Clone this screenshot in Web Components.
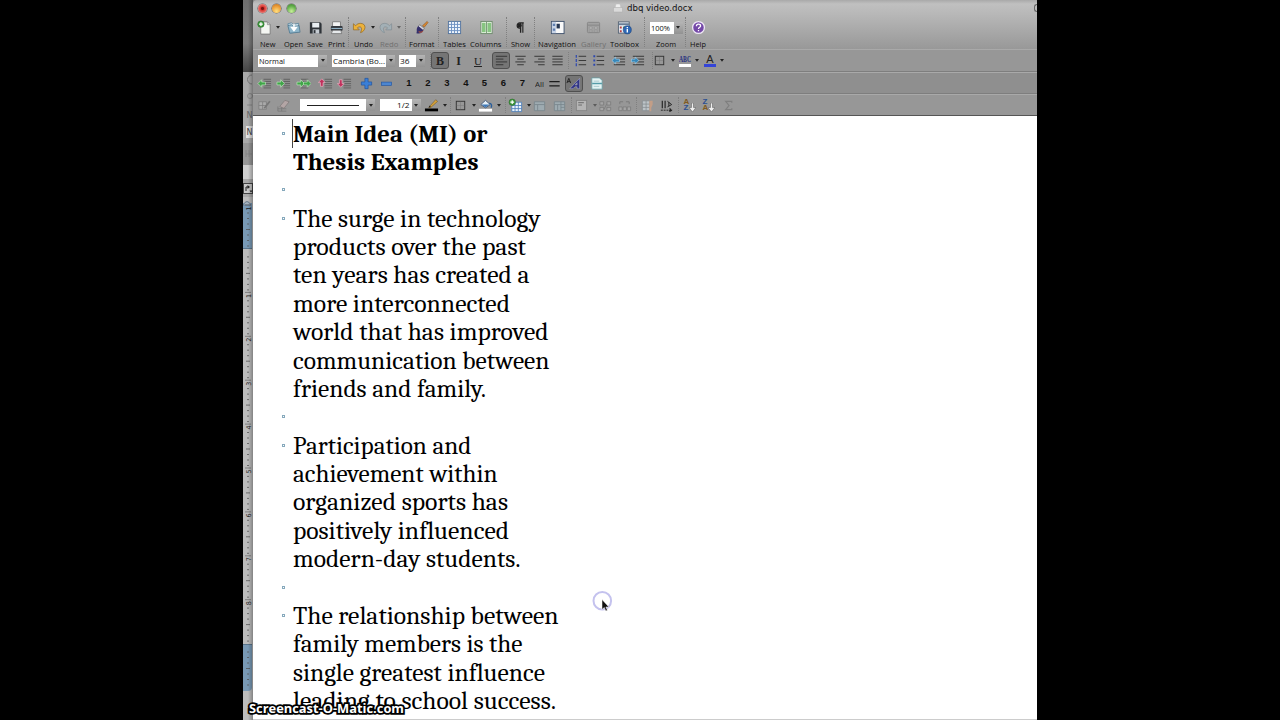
<!DOCTYPE html>
<html lang="en">
<head>
<meta charset="utf-8">
<title>dbq video.docx</title>
<style>
html, body {
    margin: 0;
    height: 100%;
    background: #000;
    overflow: hidden;
}
</style>
</head>
<body>
<screen-cast></screen-cast>
<script>
const ARROW = '<path d="M0 0h5l-2.5 3.4z" fill="#222"/>';
const lines = (x, y, w, n, gap, color) => {
    let out = '';
    for (let i = 0; i < n; i++) {
        out += `<path d="M${x} ${y + i * gap}h${w}" stroke="${color}" stroke-width="1"/>`;
    }
    return out;
};
const greenArrow = (x, flip) => `<path transform="translate(${x} 8)${flip ? ' scale(-1 1)' : ''}" d="M-4 0L0-4v2.5h4v3H0V4z" fill="#3fa548" stroke="#c4e6c2" stroke-width=".7"/>`;
const pinkArrow = (y, flip) => `<path transform="translate(4 ${y})${flip ? ' scale(1 -1)' : ''}" d="M0-4L-3.6 0h2.2v4h2.8V0h2.2z" fill="#c0305c" stroke="#e8b5c4" stroke-width=".7"/>`;

/* every icon is drawn in a 16x16 box */
const ICONS = {
    'new': '<path d="M4 2h7l3 3v10H4z" fill="#f4f6f2" stroke="#707070" stroke-width=".8"/><path d="M11 2v3h3" fill="#ccc" stroke="#777" stroke-width=".6"/><circle cx="4.2" cy="4.4" r="3.4" fill="#3f9a3d" stroke="#276a28" stroke-width=".6"/><path d="M4.2 2.4v4M2.2 4.4h4" stroke="#fff" stroke-width="1.4"/>',
    open: '<path d="M2 4l4-1 1.500 1.500 6-1v9l-9 1.500z" fill="#c5dbe6" stroke="#537d95" stroke-width=".8"/><path d="M4 14l-2-8 4-1 2 2 6-1 1 7z" fill="#8fb6ca" stroke="#456e86" stroke-width=".7"/><path d="M8.500 4v5M5.800 8h5.400L8.500 11.500z" stroke="#fff" stroke-width="1.400" fill="#fff"/>',
    save: '<path d="M2 2.500h11l1.500 1.500v10.500H2z" fill="#2e3338"/><rect x="4.500" y="3" width="7.500" height="5" fill="#e9eef2"/><rect x="5" y="10" width="7" height="4.500" fill="#c6ccd2"/><rect x="6" y="10.800" width="2" height="3.200" fill="#2e3338"/>',
    print: '<rect x="4" y="2" width="8" height="5" fill="#f3f3f3" stroke="#555" stroke-width=".6"/><rect x="2" y="6.500" width="12.500" height="5" rx="1" fill="#353a40"/><path d="M2.500 9h11.500" stroke="#9fc3d8"/><path d="M4 11h8.500l1 3.500h-11z" fill="#e6e9eb" stroke="#555" stroke-width=".6"/>',
    undo: '<path d="M1.500 4v6.500h6.300L5.700 8.300c2.600-2 5.300-.8 4.400 2.600l-1 2.600c5.800-1.700 6.800-9.600.2-9.900-2.300-.1-4.200.9-5.500 2.500z" fill="#edb23a" stroke="#8e641b" stroke-width=".7"/>',
    redo: '<path transform="matrix(-1 0 0 1 16 0)" d="M1.500 4v6.500h6.300L5.700 8.300c2.600-2 5.300-.8 4.400 2.600l-1 2.600c5.800-1.700 6.800-9.600.2-9.900-2.300-.1-4.200.9-5.500 2.500z" fill="#a3b0b6" stroke="#7e8b91" stroke-width=".7"/>',
    format: '<path d="M14 1.500l1 1.200-4 5-2-1.500z" fill="#d98832" stroke="#7a4513" stroke-width=".5"/><path d="M6 5l5 4-1.500 2-5-4z" fill="#d6d6de" stroke="#444" stroke-width=".5"/><path d="M4.500 6.500l5.500 4.500c-.5 3-4 4-7.500 3C4 12 1.500 10 4.500 6.500z" fill="#35306d"/><path d="M5 12.500c2 1 4 .5 4.500-1" stroke="#d35f30" fill="none"/>',
    tables: '<rect x="1.500" y="1.500" width="13" height="13" fill="#eef4fc" stroke="#54759f"/><path d="M2 4.700h12M2 8h12M2 11.300h12M4.800 2v12M8 2v12M11.200 2v12" stroke="#6d91c2"/>',
    columns: '<rect x="2" y="1.500" width="12" height="13" fill="#e9f5e6" stroke="#6d8a6b"/><rect x="3.200" y="3" width="3.800" height="10" fill="#87c581"/><rect x="9" y="3" width="3.800" height="10" fill="#87c581"/><path d="M8 2v12" stroke="#7a9478"/>',
    show: '<path d="M11.500 3H7.200a2.800 2.800 0 000 5.600H8V13.500M8.200 3v10.500M10.500 3v10.500" stroke="#222" stroke-width="1.200" fill="none"/><circle cx="7" cy="5.800" r="2.300" fill="#222"/>',
    navigation: '<rect x="1.500" y="1.500" width="13.500" height="13" fill="#fafafa" stroke="#40536e"/><rect x="2" y="2" width="4.500" height="12" fill="#c7d3e6"/><path d="M3 4h2.500v2.500H3zM3 9h2.500v2.500H3z" fill="#5f7fb0"/><rect x="7" y="4" width="3.500" height="5" fill="#263753"/>',
    gallery: '<rect x="1.500" y="2.500" width="13" height="11" rx="1" fill="#a2a2a2" stroke="#858585"/><path d="M2 5.500h12" stroke="#858585"/><path d="M3.500 7.500h3v2h-3zM9 7.500h3v2H9zM3.500 11h3v1.500h-3zM9 11h3v1.500H9z" fill="#bcbcbc" stroke="#858585" stroke-width=".5"/>',
    toolbox: '<rect x="1.500" y="2" width="11.500" height="12" fill="#e6ecf2" stroke="#566475"/><path d="M2 4.500h11" stroke="#697d94" stroke-width="2"/><path d="M3 7h2v2H3zM3 11h2v2H3z" fill="#b84040"/><path d="M6.500 7h2v2h-2z" fill="#599256"/><circle cx="11" cy="10.500" r="4.300" fill="#2d67b5" stroke="#173e79" stroke-width=".6"/><path d="M11 9.700v3.600M11 7.500v1.200" stroke="#fff" stroke-width="1.500"/>',
    help: '<circle cx="8" cy="8" r="6.300" fill="#7448a8" stroke="#efe8f6" stroke-width="1.400"/><path d="M5.800 6.600c0-3 4.400-2.700 4.400-.3 0 1.500-2.200 1.600-2.200 3.300M8 10.700v1.400" stroke="#fff" stroke-width="1.400" fill="none"/>',
    left: lines(2, 3.5, 12, 1, 1, '#333') + lines(2, 6.5, 8, 1, 1, '#333') + lines(2, 9.5, 12, 1, 1, '#333') + lines(2, 12.5, 8, 1, 1, '#333'),
    center: lines(2.5, 3.5, 11, 1, 1, '#333') + lines(4.5, 6.5, 7, 1, 1, '#333') + lines(2.5, 9.5, 11, 1, 1, '#333') + lines(4.5, 12.5, 7, 1, 1, '#333'),
    right: lines(2.5, 3.5, 11, 1, 1, '#333') + lines(6.5, 6.5, 7, 1, 1, '#333') + lines(2.5, 9.5, 11, 1, 1, '#333') + lines(6.5, 12.5, 7, 1, 1, '#333'),
    justify: lines(2.5, 3.5, 11, 4, 3, '#333'),
    numbers: '<path d="M3.500 2v3M3.500 6.500v3M3.500 11v3" stroke="#2d48b0" stroke-width="1.300"/>' + lines(6, 3.5, 8, 3, 4.5, '#333'),
    bullets: '<path d="M2.500 2.500h2v2h-2zM2.500 7h2v2h-2zM2.500 11.500h2v2h-2z" fill="#2d48b0"/>' + lines(6, 3.5, 8, 3, 4.5, '#333'),
    outdent: lines(3, 3.5, 12, 4, 3, '#333') + '<path d="M1 8l4-3.700v2.200h4v3H5v2.200z" fill="#3587ba" stroke="#b8dcef" stroke-width=".6"/>',
    indent: lines(3, 3.5, 12, 4, 3, '#333') + '<path d="M9.500 8l-4-3.700v2.200h-4v3h4v2.200z" fill="#3587ba" stroke="#b8dcef" stroke-width=".6"/>',
    border: '<rect x="3.500" y="3.500" width="9" height="9" fill="none" stroke="#333"/><path d="M4 8h8M8 4v8" stroke="#777" stroke-width=".5"/>',
    promote: lines(7, 3.5, 8, 5, 2.3, '#606060') + greenArrow(5),
    demote: lines(8, 3.5, 7, 5, 2.3, '#606060') + greenArrow(5, true),
    body: lines(5, 3.5, 8, 5, 2.3, '#606060') + greenArrow(5, true) + greenArrow(12, true),
    up: lines(7, 3.5, 8, 5, 2.3, '#606060') + pinkArrow(7),
    down: lines(7, 3.5, 8, 5, 2.3, '#606060') + pinkArrow(8, true),
    plus: '<path d="M6.300 2.500h3.400v3.800h3.800v3.400H9.700v3.800H6.300V9.700H2.500V6.300h3.800z" fill="#3b7fd6" stroke="#2456a0" stroke-width=".8"/>',
    minus: '<rect x="2.500" y="6.500" width="11" height="3.500" fill="#4c86d0" stroke="#2456a0" stroke-width=".7"/>',
    equals: '<path d="M2.500 6h11M2.500 10.500h11" stroke="#1c1c1c" stroke-width="1.500"/>',
    formatting: '<path d="M1 7.500l2-5 2 5M1.700 6h2.700" fill="none" stroke="#222" stroke-width="1"/><path fill-rule="evenodd" d="M4 13.500L14.500 2.500v11h-2.700v-2H9.500l-2 2zM11.800 7.200v2.300H9.800z" fill="#303486" stroke="#d5d5e5" stroke-width=".4"/>',
    master: '<path d="M3 2h8l3 2.500V14H3z" fill="#e5f4f4" stroke="#679da4" stroke-width=".8"/><path d="M3.400 8h10.400" stroke="#549ca8" stroke-width="1.600"/><path d="M5 5.500h6M5 11h6" stroke="#a5c8cc"/>',
    drawtable: '<path d="M2 4h8v8H2zM2 8h8M6 4v8" fill="#aaa" stroke="#7b7b7b" stroke-width=".8"/><path d="M7 10.500L13 3l1.500 1-6 7.500z" fill="#777"/>',
    eraser: '<path d="M2 9v5h9M2 11.500h9M6 9v5" fill="none" stroke="#777" stroke-width=".8"/><path d="M4 9l5.500-6.500L14 4l-5.500 7z" fill="#b3a5a5" stroke="#7a7474" stroke-width=".7"/>',
    pen: '<rect x="1" y="11.200" width="14" height="3" fill="#000"/><path d="M5 10L12.500 1.800l2 1.800L7 10.300z" fill="#d4a23b" stroke="#624716" stroke-width=".5"/><path d="M5 10l1-2 1.500 1.500z" fill="#222"/>',
    bucket: '<rect x="1" y="11.500" width="14" height="3" fill="#fff"/><path d="M3 7l5-4.500 5 4.500-5 3.500z" fill="#e5eef5" stroke="#374d6c" stroke-width=".9"/><path d="M4 7h8l-4 3z" fill="#3d78b8"/><path d="M12 5.500c3 .5 2.800 3 2 4.800" stroke="#285d9b" stroke-width="1.400" fill="none"/>',
    inserttable: '<path d="M4 4.500h10.500v10H4zM4 8h10.500M4 11.300h10.500M7.500 4.500v10M11 4.500v10" fill="#eaf3fc" stroke="#4d7fb9" stroke-width=".9"/><circle cx="4.500" cy="4.500" r="3.400" fill="#3f9a3d" stroke="#276a28" stroke-width=".6"/><path d="M4.500 2.500v4M2.500 4.500h4" stroke="#fff" stroke-width="1.300"/>',
    delrow: '<path d="M2.500 4h11v9.500h-11zM2.500 7h11M6 7v6.500" fill="#9eabb1" stroke="#79868c" stroke-width=".9"/>',
    delcol: '<path d="M2.500 4h11v9.500h-11zM2.500 7h11M6 7v6.500M9.500 4v9.500M9.500 10h4" fill="#9eabb1" stroke="#79868c" stroke-width=".9"/>',
    alignbox: '<rect x="2.500" y="2.500" width="11" height="11" fill="#b5b5b5" stroke="#858585"/><path d="M4.500 5h6M4.500 7.500h4" stroke="#666"/>',
    merge: '<path d="M2 4h4v3.500H2zM2 10h4v3.500H2zM9.500 4h4v3.500h-4zM9.500 10h4v3.500h-4z" fill="#a5a5a5" stroke="#7a7a7a" stroke-width=".8"/><path d="M6.500 12l3-6" stroke="#808080"/>',
    split: '<path d="M2 9.500h3.500v4H2zM6.500 9.500H10v4H6.500zM11 9.500h3.500v4H11z" fill="#a5a5a5" stroke="#7a7a7a" stroke-width=".8"/><path d="M3 6.500V4h3.500M13 6.500V4H9.500" fill="none" stroke="#7a7a7a"/>',
    autofit: '<path d="M2.500 3h8v10.500h-8zM2.500 6.500h8M2.500 10h8M6.500 3v10.500" fill="#bcc3c7" stroke="#848b8f" stroke-width=".8"/><path d="M10 3h3.500v4L12 10.500V14h-2z" fill="#c39e87"/>',
    direction: '<path d="M3.500 3v8M6.500 3v8" stroke="#222" stroke-width="1.200"/><path d="M9 3.500l4.500 3.500L9 9.500M10.500 4.500v4" stroke="#222" fill="none"/><path d="M2 13h10.500M11.500 11.300l2.500 1.700-2.500 1.700z" stroke="#222" stroke-dasharray="2 1" fill="#222"/>',
    sigma: '<path d="M11.500 5V3.500h-6.500L8.500 8 5 12.500h6.500V11" fill="none" stroke="#7f7f7f" stroke-width="1.300"/>'
};

function define(name, html, ready) {
    const template = document.createElement('template');
    template.innerHTML = html;
    customElements.define(name, class extends HTMLElement {
        shadowRoot = this.attachShadow({mode: 'open'});
        constructor() {
            super();
            this.shadowRoot.append(template.content.cloneNode(true));
        }
        connectedCallback() {
            if (ready) {
                ready(this, this.shadowRoot);
            }
        }
    });
}

/* text squeezed or stretched to a given width */
define('fit-text', `
<style>
:host {
    display: block;
    flex: none;
}
span {
    display: block;
    width: max-content;
    white-space: nowrap;
    transform-origin: 0 50%;
}
</style>
<span></span>
`, (host, root) => {
    const span = root.querySelector('span');
    span.textContent = host.getAttribute('text');
    const width = Number(host.getAttribute('width'));
    const natural = span.getBoundingClientRect().width;
    host.style.width = `${width}px`;
    if (natural) {
        span.style.transform = `scaleX(${width / natural})`;
    }
});

define('tool-icon', `
<style>
:host {
    display: block;
    flex: none;
    width: 15px;
    height: 15px;
}
svg {
    display: block;
    width: 100%;
    height: 100%;
}
</style>
<svg viewBox="0 0 16 16"></svg>
`, (host, root) => {
    root.querySelector('svg').innerHTML = ICONS[host.getAttribute('name')] || '';
});

define('drop-arrow', `
<style>
:host {
    display: block;
    flex: none;
    width: 4px;
    height: 3px;
}
svg {
    display: block;
}
</style>
<svg width="4" height="3" viewBox="0 0 5 3.500">${ARROW}</svg>
`);

define('tool-cell', `
<style>
:host {
    display: flex;
    flex: none;
    align-items: center;
    justify-content: center;
    height: 100%;
    white-space: nowrap;
}
.button {
    display: flex;
    flex: none;
    align-items: center;
    justify-content: center;
    gap: 4px;
}
:host([pressed]) .button {
    width: 18px;
    height: 17px;
    border: 1px solid #505050;
    border-radius: 3px;
    background: #757575;
    box-sizing: border-box;
}
:host([label]) {
    flex-direction: column;
    justify-content: flex-start;
}
:host([label]) .button {
    height: 17px;
    margin-top: 4px;
}
fit-text {
    display: none;
    color: #111;
    font: 8px/11px "Lucida Grande", "Open Sans", "DejaVu Sans", sans-serif;
    margin-top: 2px;
}
:host([label]) fit-text {
    display: block;
}
:host([disabled]) fit-text {
    color: #717171;
}
</style>
<div class="button"><slot></slot></div>
`, (host, root) => {
    host.style.width = `${host.getAttribute('w')}px`;
    if (host.hasAttribute('label')) {
        const text = document.createElement('fit-text');
        text.setAttribute('text', host.getAttribute('label'));
        text.setAttribute('width', host.getAttribute('lw'));
        root.append(text);
    }
});

define('tool-sep', `
<style>
:host {
    display: flex;
    flex: none;
    justify-content: center;
    align-items: center;
    height: 100%;
}
i {
    height: calc(100% - 4px);
    border-left: 1px dotted #808080;
}
</style>
<i></i>
`, host => {
    host.style.width = `${host.getAttribute('w')}px`;
});

define('combo-box', `
<style>
:host {
    display: flex;
    flex: none;
    height: 12px;
    background: #fff;
    align-items: stretch;
    color: #111;
    font: 8px/12px "Lucida Grande", "Open Sans", "DejaVu Sans", sans-serif;
}
div {
    flex: 1;
    display: flex;
    align-items: center;
    padding: 0 1px;
    min-width: 0;
}
:host([end]) div {
    justify-content: flex-end;
    padding-right: 2px;
}
b {
    display: flex;
    align-items: center;
    justify-content: center;
    width: 9px;
    background: linear-gradient(#b5b5b5, #929292);
}
</style>
<div><slot></slot></div><b><drop-arrow></drop-arrow></b>
`, host => {
    host.style.width = `${host.getAttribute('w')}px`;
});

define('tool-row', `
<style>
:host {
    display: flex;
    align-items: center;
    box-sizing: border-box;
    border-top: 1px solid #a9a9a9;
    border-bottom: 1px solid #7e7e7e;
    background: #979797;
}
</style>
<slot></slot>
`);

define('title-bar', `
<style>
:host {
    display: flex;
    height: 14px;
    align-items: center;
    padding-left: 5px;
    box-sizing: border-box;
}
.light {
    width: 9px;
    height: 9px;
    margin-right: 5.300px;
    border-radius: 50%;
    box-shadow: 0 0 0 .6px #666;
}
.close { background: radial-gradient(circle at 50% 50%, #7c1414 18%, #d9352f 30%, #f1a29d 95%); }
.min { background: radial-gradient(circle at 50% 80%, #ffe080, #ea9a35 60%, #b86d20); }
.zoom { background: radial-gradient(circle at 50% 80%, #c9f09a, #61ae49 60%, #3d7c30); }
.title {
    display: flex;
    align-items: center;
    gap: 4px;
    margin-left: 312px;
    color: #111;
    font: 9.500px/12px "Lucida Grande", "DejaVu Sans", sans-serif;
}
.corner {
    margin-left: auto;
    width: 2px;
    height: 6px;
    border: 1px solid #666;
    border-right: 0;
    border-radius: 6px 0 0 6px;
}
</style>
<i class="light close"></i><i class="light min"></i><i class="light zoom"></i>
<div class="title">
    <svg width="10" height="10" viewBox="0 0 10 10"><path d="M3 1h4l1 4H2z" fill="#eee" stroke="#bbb" stroke-width=".5"/><path d="M.5 4.500h9V9h-9z" fill="#dadada" stroke="#aaa" stroke-width=".5"/></svg>
    <fit-text text="dbq video.docx" width="65.500"></fit-text>
</div>
<i class="corner"></i>
`);

define('word-toolbars', `
<style>
:host {
    display: block;
    border-bottom: 1px solid #555;
}
.top {
    height: 49px;
    padding-top: 1px;
    box-sizing: border-box;
    background: linear-gradient(#a9a9a9, #c0c0c0 8%, #b7b7b7 30%, #989898);
    border-top-left-radius: 4px;
}
.main {
    height: 34px;
    background: none;
    border: 0;
}
.format { height: 23px; }
.outline { height: 22px; background: #8f8f8f; }
.tables { height: 21px; border-bottom: 0; }
.glyph { font: bold 12px/14px "Liberation Serif", serif; color: #222; }
.light { font-weight: normal; font-size: 11px; }
.num { font: bold 9.500px/12px "Liberation Sans", sans-serif; color: #111; padding-left: 1px; }
.all { font: 8px/12px "Open Sans", "DejaVu Sans", sans-serif; color: #222; padding-top: 1px; }
.color {
    display: flex;
    flex-direction: column;
    align-items: center;
    font: 11px/10px "Liberation Sans", sans-serif;
    color: #222;
    border-bottom: 3px solid #3344d8;
    width: 12px;
}
.abc {
    font: bold 8px/8px "Liberation Serif", serif;
    color: #26307f;
    border-color: #fff;
    padding-top: 2px;
}
.sort {
    display: flex;
    align-items: flex-end;
    font: bold 8px/6.500px "Liberation Sans", sans-serif;
}
.sort span { display: flex; flex-direction: column; }
.rule { width: 52px; border-top: 1px solid #222; margin: 0 6px; }
</style>
<div class="top">
<title-bar></title-bar>
<tool-row class="main">
    <tool-cell w="30" label="New" lw="15.500"><tool-icon name="new"></tool-icon><drop-arrow></drop-arrow></tool-cell>
    <tool-cell w="20" label="Open" lw="19"><tool-icon name="open"></tool-icon></tool-cell>
    <tool-cell w="24" label="Save" lw="16"><tool-icon name="save"></tool-icon></tool-cell>
    <tool-cell w="18" label="Print" lw="17"><tool-icon name="print"></tool-icon></tool-cell>
    <tool-sep w="6"></tool-sep>
    <tool-cell w="25" label="Undo" lw="19"><tool-icon name="undo"></tool-icon><drop-arrow></drop-arrow></tool-cell>
    <tool-cell w="27" label="Redo" lw="18.500" disabled><tool-icon name="redo"></tool-icon><drop-arrow style="opacity:.5"></drop-arrow></tool-cell>
    <tool-sep w="5"></tool-sep>
    <tool-cell w="27" label="Format" lw="25.500"><tool-icon name="format"></tool-icon></tool-cell>
    <tool-sep w="6"></tool-sep>
    <tool-cell w="27" label="Tables" lw="23"><tool-icon name="tables"></tool-icon></tool-cell>
    <tool-cell w="36" label="Columns" lw="31.500"><tool-icon name="columns"></tool-icon></tool-cell>
    <tool-sep w="5"></tool-sep>
    <tool-cell w="22" label="Show" lw="19"><tool-icon name="show"></tool-icon></tool-cell>
    <tool-sep w="6"></tool-sep>
    <tool-cell w="40" label="Navigation" lw="38"><tool-icon name="navigation"></tool-icon></tool-cell>
    <tool-cell w="32" label="Gallery" lw="25" disabled><tool-icon name="gallery"></tool-icon></tool-cell>
    <tool-cell w="31" label="Toolbox" lw="29"><tool-icon name="toolbox"></tool-icon></tool-cell>
    <tool-sep w="8"></tool-sep>
    <tool-cell w="36" label="Zoom" lw="20"><combo-box w="33"><fit-text text="100%" width="19"></fit-text></combo-box></tool-cell>
    <tool-sep w="3"></tool-sep>
    <tool-cell w="22" label="Help" lw="16"><tool-icon name="help"></tool-icon></tool-cell>
</tool-row>
</div>
<tool-row class="format">
    <tool-cell w="79"><combo-box w="69"><fit-text text="Normal" width="26"></fit-text></combo-box></tool-cell>
    <tool-cell w="63"><combo-box w="63"><fit-text text="Cambria (Bo..." width="52"></fit-text></combo-box></tool-cell>
    <tool-cell w="34"><combo-box w="26"><fit-text text="36" width="9.500"></fit-text></combo-box></tool-cell>
    <tool-sep w="2"></tool-sep>
    <tool-cell w="18" pressed><span class="glyph">B</span></tool-cell>
    <tool-cell w="19"><i class="glyph">I</i></tool-cell>
    <tool-cell w="20"><u class="glyph light">U</u></tool-cell>
    <tool-cell w="26" pressed><tool-icon name="left"></tool-icon></tool-cell>
    <tool-cell w="12"><tool-icon name="center"></tool-icon></tool-cell>
    <tool-cell w="26"><tool-icon name="right"></tool-icon></tool-cell>
    <tool-cell w="11"><tool-icon name="justify"></tool-icon></tool-cell>
    <tool-sep w="11"></tool-sep>
    <tool-cell w="12"><tool-icon name="numbers"></tool-icon></tool-cell>
    <tool-cell w="25"><tool-icon name="bullets"></tool-icon></tool-cell>
    <tool-cell w="14"><tool-icon name="outdent"></tool-icon></tool-cell>
    <tool-cell w="24"><tool-icon name="indent"></tool-icon></tool-cell>
    <tool-sep w="7"></tool-sep>
    <tool-cell w="15"><tool-icon name="border"></tool-icon><drop-arrow></drop-arrow></tool-cell>
    <tool-cell w="36"><span class="color abc"><fit-text text="ABC" width="12"></fit-text></span><drop-arrow></drop-arrow></tool-cell>
    <tool-cell w="14"><span class="color">A</span><drop-arrow></drop-arrow></tool-cell>
</tool-row>
<tool-row class="outline">
    <tool-cell w="23"><tool-icon name="promote"></tool-icon></tool-cell>
    <tool-cell w="15"><tool-icon name="demote"></tool-icon></tool-cell>
    <tool-cell w="24"><tool-icon name="body"></tool-icon></tool-cell>
    <tool-cell w="20"><tool-icon name="up"></tool-icon></tool-cell>
    <tool-cell w="19"><tool-icon name="down"></tool-icon></tool-cell>
    <tool-cell w="25"><tool-icon name="plus"></tool-icon></tool-cell>
    <tool-cell w="14"><tool-icon name="minus"></tool-icon></tool-cell>
    <tool-cell w="6"></tool-cell>
    <tool-cell w="19"><span class="num">1</span></tool-cell>
    <tool-cell w="19"><span class="num">2</span></tool-cell>
    <tool-cell w="19"><span class="num">3</span></tool-cell>
    <tool-cell w="19"><span class="num">4</span></tool-cell>
    <tool-cell w="18"><span class="num">5</span></tool-cell>
    <tool-cell w="20"><span class="num">6</span></tool-cell>
    <tool-cell w="18"><span class="num">7</span></tool-cell>
    <tool-cell w="16"><span class="all"><fit-text text="All" width="9"></fit-text></span></tool-cell>
    <tool-cell w="14"><tool-icon name="equals"></tool-icon></tool-cell>
    <tool-cell w="25" pressed><tool-icon name="formatting"></tool-icon></tool-cell>
    <tool-cell w="21"><tool-icon name="master"></tool-icon></tool-cell>
</tool-row>
<tool-row class="tables">
    <tool-cell w="23"><tool-icon name="drawtable"></tool-icon></tool-cell>
    <tool-cell w="15"><tool-icon name="eraser"></tool-icon></tool-cell>
    <tool-cell w="93"><combo-box w="75"><i class="rule"></i></combo-box></tool-cell>
    <tool-cell w="32"><combo-box w="41" end><fit-text text="1/2" width="12.500"></fit-text></combo-box></tool-cell>
    <tool-cell w="8"></tool-cell>
    <tool-cell w="23"><tool-icon name="pen"></tool-icon><drop-arrow></drop-arrow></tool-cell>
    <tool-sep w="6"></tool-sep>
    <tool-cell w="23"><tool-icon name="border"></tool-icon><drop-arrow></drop-arrow></tool-cell>
    <tool-cell w="26"><tool-icon name="bucket"></tool-icon><drop-arrow></drop-arrow></tool-cell>
    <tool-sep w="7"></tool-sep>
    <tool-cell w="20"><tool-icon name="inserttable"></tool-icon><drop-arrow></drop-arrow></tool-cell>
    <tool-cell w="20"><tool-icon name="delrow"></tool-icon></tool-cell>
    <tool-cell w="20"><tool-icon name="delcol"></tool-icon></tool-cell>
    <tool-sep w="5"></tool-sep>
    <tool-cell w="22"><tool-icon name="alignbox"></tool-icon><drop-arrow style="opacity:.5"></drop-arrow></tool-cell>
    <tool-cell w="19"><tool-icon name="merge"></tool-icon></tool-cell>
    <tool-cell w="19"><tool-icon name="split"></tool-icon></tool-cell>
    <tool-sep w="4"></tool-sep>
    <tool-cell w="18"><tool-icon name="autofit"></tool-icon></tool-cell>
    <tool-cell w="20"><tool-icon name="direction"></tool-icon></tool-cell>
    <tool-sep w="4"></tool-sep>
    <tool-cell w="20"><div class="sort"><span><b style="color:#805a20">A</b><b style="color:#2b4f91">Z</b></span><svg width="7" height="9" viewBox="0 0 7 9"><path d="M2.500 0h2v4.500H7L3.500 9 0 4.500h2.500z" fill="#eee" stroke="#555" stroke-width=".5"/></svg></div></tool-cell>
    <tool-cell w="18"><div class="sort"><span><b style="color:#2b4f91">Z</b><b style="color:#805a20">A</b></span><svg width="7" height="9" viewBox="0 0 7 9"><path d="M2.500 0h2v4.500H7L3.500 9 0 4.500h2.500z" fill="#eee" stroke="#555" stroke-width=".5"/></svg></div></tool-cell>
    <tool-cell w="21"><tool-icon name="sigma"></tool-icon></tool-cell>
</tool-row>
`);

define('doc-line', `
<style>
:host {
    display: flex;
    height: 28.380px;
    align-items: center;
}
i {
    flex: none;
    width: 1px;
    height: 1px;
    margin: 0 8px 0 29px;
    border: 1px solid #86a9bc;
    visibility: hidden;
}
:host([bullet]) i {
    visibility: visible;
}
fit-text {
    color: #000;
    font: 25px/28px Cambria, Caladea, "DejaVu Serif Condensed", "DejaVu Serif", serif;
    padding-top: 1px;
}
:host([bold]) fit-text {
    font-weight: bold;
}
:host([caret]) fit-text {
    box-shadow: -1px 0 0 #444;
}
</style>
<i></i>
`, (host, root) => {
    if (host.hasAttribute('text')) {
        const text = document.createElement('fit-text');
        text.setAttribute('text', host.getAttribute('text'));
        text.setAttribute('width', host.getAttribute('w'));
        root.append(text);
    }
});

define('word-page', `
<style>
:host {
    display: block;
    flex: 1;
    min-height: 0;
    padding-top: 2.900px;
    background: #fff;
    overflow: hidden;
}
</style>
<doc-line bullet bold caret text="Main Idea (MI) or" w="194.500"></doc-line>
<doc-line bold text="Thesis Examples" w="185.500"></doc-line>
<doc-line bullet></doc-line>
<doc-line bullet text="The surge in technology" w="247.500"></doc-line>
<doc-line text="products over the past" w="233"></doc-line>
<doc-line text="ten years has created a" w="236.500"></doc-line>
<doc-line text="more interconnected" w="217"></doc-line>
<doc-line text="world that has improved" w="255.500"></doc-line>
<doc-line text="communication between" w="256.500"></doc-line>
<doc-line text="friends and family." w="193"></doc-line>
<doc-line bullet></doc-line>
<doc-line bullet text="Participation and" w="178.500"></doc-line>
<doc-line text="achievement within" w="204.500"></doc-line>
<doc-line text="organized sports has" w="215"></doc-line>
<doc-line text="positively influenced" w="216"></doc-line>
<doc-line text="modern-day students." w="227.500"></doc-line>
<doc-line bullet></doc-line>
<doc-line bullet text="The relationship between" w="265.500"></doc-line>
<doc-line text="family members is the" w="229.500"></doc-line>
<doc-line text="single greatest influence" w="252"></doc-line>
<doc-line text="leading to school success." w="263"></doc-line>
`);

define('word-window', `
<style>
:host {
    display: flex;
    flex-direction: column;
    width: 784px;
    height: 719px;
    border-bottom: 1px solid #ccc;
    background: #888;
}
</style>
<word-toolbars></word-toolbars>
<word-page></word-page>
`);

/* left sliver of the window behind, with its vertical ruler */
define('back-window', `
<style>
:host {
    display: block;
    width: 10px;
    height: 720px;
}
svg {
    display: block;
}
text {
    font-family: "DejaVu Sans", sans-serif;
}
</style>
<svg width="10" height="720">
    <defs>
        <linearGradient id="desk" x2="0" y2="1"><stop stop-color="#6f6f6f"/><stop offset=".6" stop-color="#7b7b7b"/><stop offset="1" stop-color="#444"/></linearGradient>
        <linearGradient id="edge"><stop offset=".5" stop-color="#000" stop-opacity="0"/><stop offset="1" stop-color="#000" stop-opacity=".3"/></linearGradient>
    </defs>
    <rect width="10" height="72" fill="url(#desk)"/>
    <rect y="72" width="10" height="648" fill="#a9a9a9"/>
    <path d="M9 75a4.500 4.500 0 100 9" fill="none" stroke="#777"/>
    <circle cx="7" cy="96" r="2.500" fill="none" stroke="#888"/>
    <path d="M4 105h5" stroke="#888"/>
    <text x="3.500" y="118" font-size="8" fill="#666">N</text>
    <rect x="3" y="126" width="7" height="12" fill="#e2e2e2"/>
    <text x="3.500" y="135" font-size="8" fill="#444">N</text>
    <rect y="143" width="10" height="22" fill="#979797"/>
    <path d="M3 150v7M6 150v7M3 154h6" stroke="#858585"/>
    <rect y="165" width="10" height="14" fill="#cfcfcf"/>
    <rect x=".5" y="183.500" width="9" height="10" fill="#c8c8c8" stroke="#444"/>
    <path d="M3 191v-4h2" stroke="#222" fill="none" stroke-width="1"/>
    <path d="M4.500 185l2.500 2-2.500 2zM6.500 190.500h3l-1.500 2z" fill="#222"/>
    <rect y="197" width="10" height="523" fill="#bcbcbc"/>
    <rect y="203" width="9" height="46" fill="#7899b5"/>
    <path d="M0 205q4-7 8 0z" fill="#a4b2bd" stroke="#68798a"/>
    <path d="M0 644h9v43q0 4-4 4H0z" fill="#7899b5"/>
    <path d="M0 248.500h9M0 644.500h9" stroke="#59748b"/>
    <g class="ticks"></g>
    <rect width="10" height="720" fill="url(#edge)"/>
</svg>
`, (host, root) => {
    const labels = [1, 1, 2, 3, 4, 5, 6, 7, 8];
    let out = '';
    for (let n = 0; n <= 10; n++) {
        const y = 207.5 + n * 43.9;
        for (let k = 1; k < 8; k++) {
            out += `<path d="M${k === 4 ? 3 : 4} ${y + k * 5.5}h${k === 4 ? 4 : 2}" stroke="#555" stroke-width=".8"/>`;
        }
    }
    labels.forEach((label, i) => {
        const y = i === 0 ? 208 : 251.5 + i * 43.9;
        out += `<path d="M2 ${y - 3}h6" stroke="#555" stroke-width=".6"/><text transform="translate(7.500 ${y + 2.5}) rotate(-90)" font-size="6.500" fill="#222">${label}</text>`;
    });
    root.querySelector('.ticks').innerHTML = out;
});

define('mouse-pointer', `
<style>
:host {
    position: absolute;
    left: 592px;
    top: 591px;
}
svg {
    display: block;
}
</style>
<svg width="22" height="22" viewBox="0 0 22 22">
    <circle cx="10.300" cy="9.800" r="8.800" fill="none" stroke="#c4c2ee" stroke-width="2"/>
    <path d="M10 8.500v10l2.300-2 1.500 3.500 1.600-.7-1.500-3.300h3z" fill="#111" stroke="#fff" stroke-width=".5"/>
</svg>
`);

define('water-mark', `
<style>
:host {
    position: absolute;
    left: 248.500px;
    top: 701px;
    color: #fff;
    font: bold 12px/15px "Open Sans", "Noto Sans", sans-serif;
}
fit-text {
    -webkit-text-stroke: 3.500px #000;
    paint-order: stroke fill;
}
</style>
<fit-text text="Screencast-O-Matic.com" width="155"></fit-text>
`);

define('screen-cast', `
<style>
:host {
    display: flex;
    position: relative;
    box-sizing: border-box;
    width: 1280px;
    height: 720px;
    padding-left: 243px;
    background: #000;
}
</style>
<back-window></back-window>
<word-window></word-window>
<mouse-pointer></mouse-pointer>
<water-mark></water-mark>
`);
</script>
</body>
</html>
